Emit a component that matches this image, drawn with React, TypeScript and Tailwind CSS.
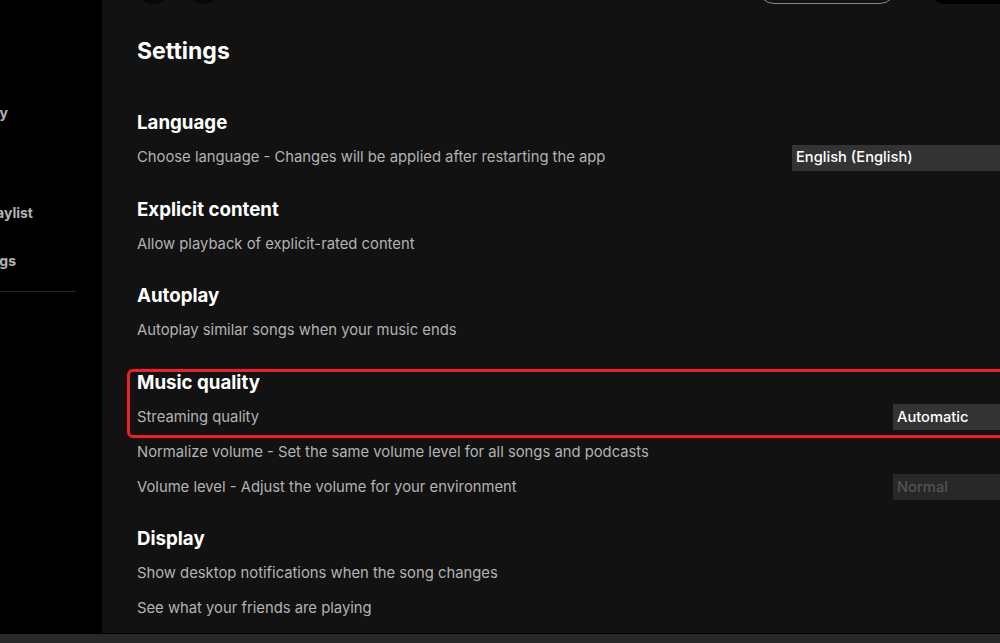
const font = { fontFamily: "Inter, 'Noto Sans', sans-serif" };

function Select({ label, muted, wide }: { label: string; muted?: boolean; wide?: boolean }) {
  return (
    <div
      className={`h-[26px] flex items-center pl-[4px] text-[14.7px] font-medium shrink-0 ${wide ? "w-[268px]" : "w-[167px]"} ${
        muted ? "bg-[#282828] text-[#535353]" : "bg-[#333333] text-white"
      }`}
    >
      {label}
    </div>
  );
}

function Row({ text, children }: { text: string; children?: React.ReactNode }) {
  return (
    <div className="h-[35px] flex items-center justify-between">
      <span className="text-[14.8px] text-[#b3b3b3] whitespace-nowrap">{text}</span>
      {children}
    </div>
  );
}

function Heading({ children }: { children: React.ReactNode }) {
  return <h2 className="h-[33px] flex items-center text-[18.7px] font-bold text-white">{children}</h2>;
}

function SideItem({ label, end }: { label: string; end: string }) {
  return (
    <div className={`h-5 flex justify-end overflow-hidden ${end}`}>
      <span className="shrink-0 whitespace-nowrap text-[14px] font-bold text-[#b3b3b3] leading-5">{label}</span>
    </div>
  );
}

export default function App() {
  return (
    <div className="w-[1000px] h-[643px] overflow-hidden bg-[#121212] flex flex-col" style={font}>
      <div className="h-[633px] flex shrink-0">
        {/* sidebar, scrolled off to the left */}
        <aside className="w-[102px] shrink-0 bg-black flex flex-col pt-[103px]">
          <SideItem label="Your Library" end="pr-[94px]" />
          <div className="mt-[80px]">
            <SideItem label="Create Playlist" end="pr-[69px]" />
          </div>
          <div className="mt-[28px]">
            <SideItem label="Liked Songs" end="pr-[86px]" />
          </div>
          <div className="mt-[20px] h-px w-[76px] bg-[#282828]" />
        </aside>

        <main className="w-[958px] shrink-0 pl-[35px] flex flex-col">
          {/* top bar, mostly scrolled out of view */}
          <div className="-mt-[28px] h-[32px] flex items-center">
            <div className="w-8 h-8 rounded-full bg-[#070707]" />
            <div className="ml-[18px] w-8 h-8 rounded-full bg-[#070707]" />
            <div className="ml-[539px] w-[138px] h-8 rounded-full border border-[#8a8a8a]" />
            <div className="ml-[34px] w-[120px] h-[31px] rounded-full bg-black" />
          </div>

          <h1 className="mt-[29px] h-[36px] flex items-center text-[23px] font-bold text-white">Settings</h1>

          <section className="mt-[38px]">
            <Heading>Language</Heading>
            <Row text="Choose language - Changes will be applied after restarting the app">
              <Select label="English (English)" wide />
            </Row>
          </section>

          <section className="mt-[18.5px]">
            <Heading>Explicit content</Heading>
            <Row text="Allow playback of explicit-rated content" />
          </section>

          <section className="mt-[18.5px]">
            <Heading>Autoplay</Heading>
            <Row text="Autoplay similar songs when your music ends" />
          </section>

          <section className="mt-[18.5px] relative">
            <Heading>Music quality</Heading>
            <Row text="Streaming quality">
              <Select label="Automatic" />
            </Row>
            <Row text="Normalize volume - Set the same volume level for all songs and podcasts" />
            <Row text="Volume level - Adjust the volume for your environment">
              <Select label="Normal" muted />
            </Row>
            <div className="absolute left-[-10px] top-[2px] w-[960px] h-[69px] rounded-[6px] border-[3px] border-[#e3262b] shadow-[0_0_3px_rgba(120,0,0,0.8)] pointer-events-none" />
          </section>

          <section className="mt-[18.5px]">
            <Heading>Display</Heading>
            <Row text="Show desktop notifications when the song changes" />
            <Row text="See what your friends are playing" />
          </section>
        </main>
      </div>
      <div className="flex-1 border-t border-black bg-[#282828]" />
    </div>
  );
}
